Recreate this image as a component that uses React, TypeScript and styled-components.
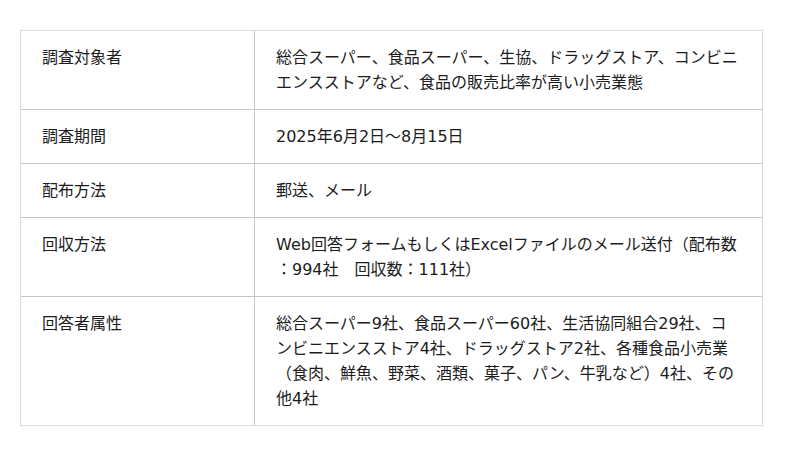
import { FC, Fragment } from "react";
import styled, { createGlobalStyle } from "styled-components";

const GlobalStyle = createGlobalStyle`
  body {
    margin: 0;
    background: #fff;
    font-family: "DejaVu Sans", "Noto Sans CJK JP", sans-serif;
  }
`;

const Table = styled.table`
  width: 743px;
  margin: 30px 0 0 20px;
  border: 1px solid #dcdcdc;
  border-spacing: 0;
  table-layout: fixed;
  font-size: 16px;
  line-height: 25px;
  color: #1c1c1c;
`;

const Row = styled.tr<{ $last?: boolean }>`
  & > th,
  & > td {
    border-bottom: ${(p) => (p.$last ? "none" : "1px solid #c6c6c6")};
  }
`;

const Label = styled.th`
  width: 234px;
  box-sizing: border-box;
  padding: 14px 21px;
  border-right: 1px solid #c6c6c6;
  text-align: left;
  vertical-align: top;
  font-weight: normal;
`;

const Value = styled.td`
  padding: 14px 21px;
  vertical-align: top;
  white-space: nowrap;
`;

const rows: { label: string; lines: string[] }[] = [
  {
    label: "調査対象者",
    lines: [
      "総合スーパー、食品スーパー、生協、ドラッグストア、コンビニ",
      "エンスストアなど、食品の販売比率が高い小売業態",
    ],
  },
  { label: "調査期間", lines: ["2025年6月2日〜8月15日"] },
  { label: "配布方法", lines: ["郵送、メール"] },
  {
    label: "回収方法",
    lines: [
      "Web回答フォームもしくはExcelファイルのメール送付（配布数",
      "：994社　回収数：111社）",
    ],
  },
  {
    label: "回答者属性",
    lines: [
      "総合スーパー9社、食品スーパー60社、生活協同組合29社、コ",
      "ンビニエンスストア4社、ドラッグストア2社、各種食品小売業",
      "（食肉、鮮魚、野菜、酒類、菓子、パン、牛乳など）4社、その",
      "他4社",
    ],
  },
];

const App: FC = () => {
  return (
    <>
      <GlobalStyle />
      <Table>
        <tbody>
          {rows.map((r, i) => (
            <Row key={r.label} $last={i === rows.length - 1}>
              <Label>{r.label}</Label>
              <Value>
                {r.lines.map((l, j) => (
                  <Fragment key={j}>
                    {j > 0 && <br />}
                    {l}
                  </Fragment>
                ))}
              </Value>
            </Row>
          ))}
        </tbody>
      </Table>
    </>
  );
};

export default App;
